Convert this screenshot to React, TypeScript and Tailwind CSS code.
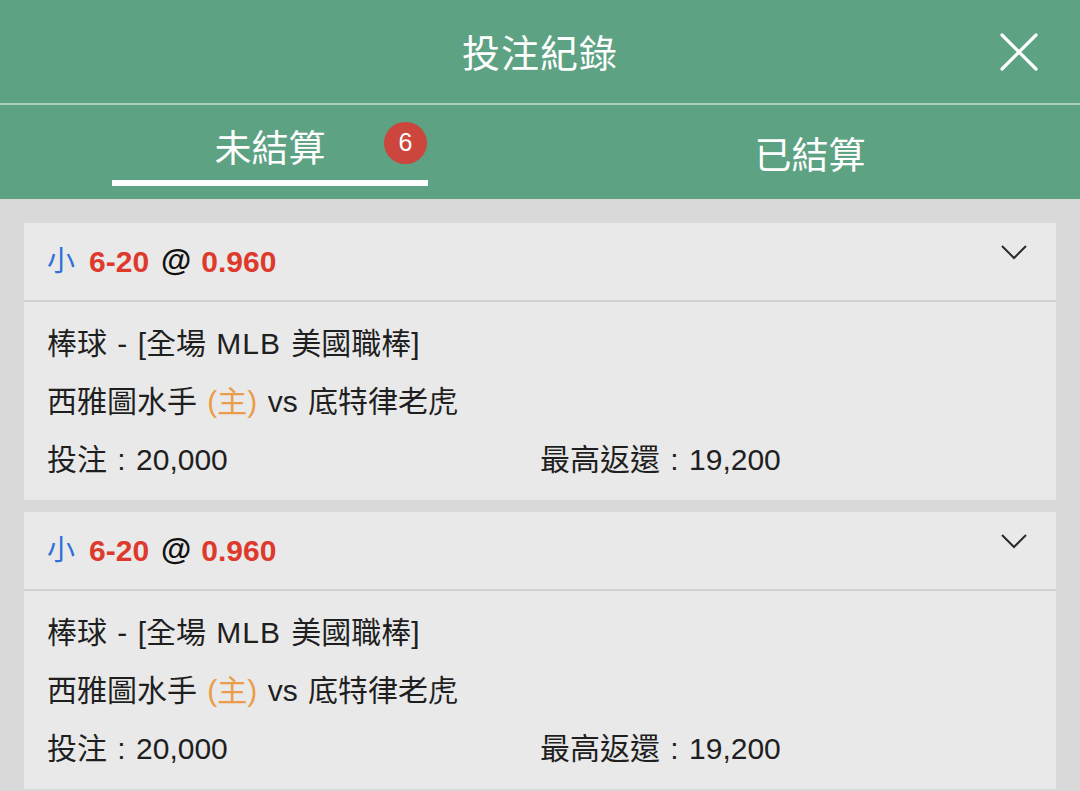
import React from "react";

interface Bet {
  side: string;
  line: string;
  odds: string;
  sport: string;
  home: string;
  away: string;
  stake: string;
  payout: string;
}

const bets: Bet[] = [
  {
    side: "小",
    line: "6-20",
    odds: "0.960",
    sport: "棒球",
    home: "西雅圖水手",
    away: "底特律老虎",
    stake: "20,000",
    payout: "19,200",
  },
  {
    side: "小",
    line: "6-20",
    odds: "0.960",
    sport: "棒球",
    home: "西雅圖水手",
    away: "底特律老虎",
    stake: "20,000",
    payout: "19,200",
  },
];

const BetCard: React.FC<{ bet: Bet }> = ({ bet }) => {
  return (
    <div className="bg-[#e9e9e9] shrink-0">
      {/* header row */}
      <div className="h-[77px] flex justify-between pl-[23px] pr-[29px]">
        <div className="flex items-center text-[30px] font-bold">
          <span className="text-[#2f6fd8] font-normal text-[28px]">{bet.side}</span>
          <span className="text-[#de3a2c] ml-[14px]">{bet.line}</span>
          <span className="text-[#111] ml-[12px] text-[31px]">@</span>
          <span className="text-[#de3a2c] ml-[10px]">{bet.odds}</span>
        </div>
        <svg className="mt-[22px]" width="26" height="15" viewBox="0 0 26 15" fill="none">
          <polyline points="1,1 13,13 25,1" stroke="#2a2a2a" strokeWidth="2" />
        </svg>
      </div>
      <div className="h-[2px] bg-[#d2d2d2]" />
      {/* body */}
      <div className="pl-[23px] pt-[13px] pb-[11px] text-[30px] leading-[58px] text-[#1f1f1f] [word-spacing:2px]">
        <div>
          {bet.sport} - [全場 <span className="tracking-[1px]">MLB</span> 美國職棒]
        </div>
        <div>
          {bet.home} <span className="text-[#eb9c4a]">(主)</span> vs {bet.away}
        </div>
        <div className="flex">
          <div className="w-[493px]">投注 : {bet.stake}</div>
          <div>最高返還 : {bet.payout}</div>
        </div>
      </div>
    </div>
  );
};

export default function App() {
  return (
    <div className="w-[1080px] h-[791px] overflow-hidden bg-[#d9d9d9] flex flex-col font-['Liberation_Sans','Noto_Sans_CJK_TC',sans-serif]">
      {/* title bar */}
      <div className="relative h-[103px] bg-[#5da283] flex items-center justify-center pt-[5px] shrink-0">
        <h1 className="text-[38px] text-white tracking-[1px]">投注紀錄</h1>
        <button className="absolute right-[42px] top-[33px]">
          <svg width="38" height="38" viewBox="0 0 38 38">
            <line x1="2" y1="2" x2="36" y2="36" stroke="white" strokeWidth="3.2" strokeLinecap="round" />
            <line x1="36" y1="2" x2="2" y2="36" stroke="white" strokeWidth="3.2" strokeLinecap="round" />
          </svg>
        </button>
      </div>
      <div className="h-[2px] bg-[#a9d0bd] shrink-0" />

      {/* tabs */}
      <div className="h-[94px] bg-[#5da283] flex shrink-0">
        <div className="relative flex-1 flex flex-col items-center pt-[25px]">
          <span className="text-[37px] leading-[40px] text-white">未結算</span>
          <div className="mt-[10px] h-[6px] w-[316px] bg-white" />
          <span className="absolute left-[384px] top-[17px] w-[43px] h-[42px] rounded-full bg-[#cc463d] text-white text-[25px] flex items-center justify-center">
            6
          </span>
        </div>
        <div className="flex-1 flex flex-col items-center pt-[32px]">
          <span className="text-[37px] leading-[40px] text-white">已結算</span>
        </div>
      </div>

      {/* list */}
      <div className="flex flex-col gap-[12px] pt-[24px] px-[24px]">
        {bets.map((b, i) => (
          <BetCard key={i} bet={b} />
        ))}
      </div>
    </div>
  );
}
